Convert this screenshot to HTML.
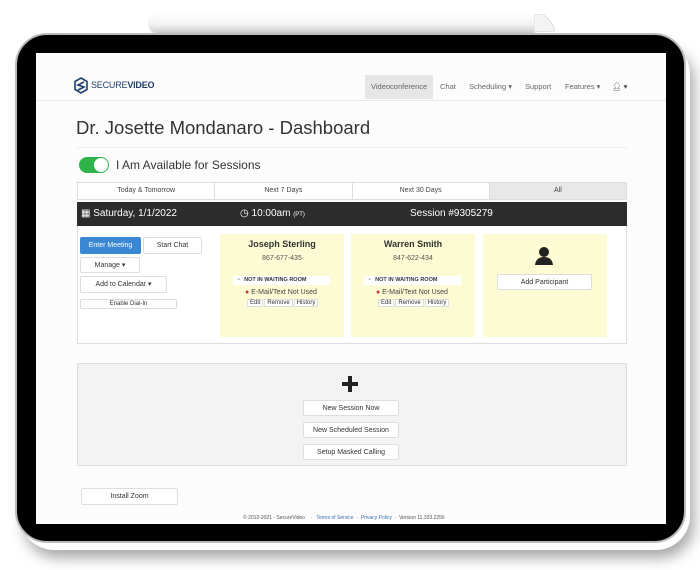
<!DOCTYPE html>
<html><head><style>
*{margin:0;padding:0;box-sizing:border-box}
body{width:700px;height:570px;background:#fff;position:relative;overflow:hidden;font-family:"Liberation Sans",sans-serif;color:#333}
.a{position:absolute}
.btn{position:absolute;background:#fff;border:1px solid #ddd;border-radius:2px;font-size:7px;text-align:center;color:#333}
.card{position:absolute;background:#fdfbd3;top:234px;height:103px;width:124px;text-align:center}
.nav{position:absolute;top:82px;font-size:7.5px;color:#666}
</style></head><body>
<div class="a" style="left:150px;top:14px;width:385px;height:18px;background:linear-gradient(#fff,#f2f2f2 60%,#d0d0d0);border-radius:9px 2px 2px 9px;box-shadow:0 2px 3px rgba(0,0,0,.25)"></div>
<svg class="a" style="left:534px;top:14px" width="22" height="18" viewBox="0 0 22 18"><path d="M0 0 L8 0 Q18 6 21 17 L0 18Z" fill="#f4f4f4" stroke="#ccc" stroke-width=".6"/></svg>
<div class="a" style="left:20px;top:40px;width:670px;height:510px;border-radius:34px;box-shadow:4px 8px 14px rgba(0,0,0,.35)"></div>
<div class="a" style="left:15px;top:33px;width:671px;height:510px;background:#000;border-radius:32px;border:2px solid #bbb"></div>
<div class="a" style="left:36px;top:53px;width:630px;height:471px;background:#fcfcfc"></div>
<svg class="a" style="left:74px;top:77px" width="14" height="17" viewBox="0 0 14 17"><path d="M7 1 L13 4.5 V12.5 L7 16 L1 12.5 V4.5Z" fill="none" stroke="#1f3e6e" stroke-width="1.6"/><path d="M10 5 L4 8 L10 10 L4 13" fill="none" stroke="#1f3e6e" stroke-width="1.6"/></svg>
<div class="a" style="left:91px;top:80px;font-size:9px;color:#1f3e6e;letter-spacing:-.2px">SECURE<b>VIDEO</b></div>
<div class="a" style="left:365px;top:75px;width:68px;height:24px;background:#e6e6e6"></div>
<div class="nav" style="left:371px">Videoconference</div>
<div class="nav" style="left:440px">Chat</div>
<div class="nav" style="left:469px">Scheduling ▾</div>
<div class="nav" style="left:525px">Support</div>
<div class="nav" style="left:565px">Features ▾</div>
<div class="nav" style="left:612px;color:#444">👤︎ ▾</div>
<div class="a" style="left:36px;top:100px;width:630px;height:1px;background:#e8e8e8"></div>
<div class="a" style="left:76px;top:117px;font-size:18.5px;color:#333">Dr. Josette Mondanaro - Dashboard</div>
<div class="a" style="left:77px;top:147px;width:550px;height:1px;background:#eee"></div>
<div class="a" style="left:79px;top:157px;width:30px;height:16px;background:#2fb34a;border-radius:8px"><div style="position:absolute;right:1px;top:1px;width:14px;height:14px;border-radius:50%;background:#fff"></div></div>
<div class="a" style="left:116px;top:158px;font-size:12px;color:#333">I Am Available for Sessions</div>
<div class="a" style="left:77px;top:182px;width:550px;height:18px;border:1px solid #ddd;display:flex;font-size:7px;color:#444;background:#fff">
<div style="flex:1;text-align:center;line-height:16px;border-right:1px solid #ddd">Today &amp; Tomorrow</div>
<div style="flex:1;text-align:center;line-height:16px;border-right:1px solid #ddd">Next 7 Days</div>
<div style="flex:1;text-align:center;line-height:16px;border-right:1px solid #ddd">Next 30 Days</div>
<div style="flex:1;text-align:center;line-height:16px;background:#e8e8e8">All</div></div>
<div class="a" style="left:77px;top:202px;width:550px;height:24px;background:#2c2c2c;color:#fff;font-size:10px">
<span class="a" style="left:4px;top:6px">▦ Saturday, 1/1/2022</span>
<span class="a" style="left:163px;top:6px">◷ 10:00am <small style="font-size:6px">(PT)</small></span>
<span class="a" style="left:333px;top:6px">Session #9305279</span></div>
<div class="a" style="left:77px;top:226px;width:550px;height:118px;border:1px solid #ddd;border-top:none;background:#fff"></div>
<div class="btn" style="left:80px;top:237px;width:61px;height:17px;line-height:16px;background:#3a87d4;color:#fff;border-color:#3a87d4">Enter Meeting</div>
<div class="btn" style="left:143px;top:237px;width:59px;height:17px;line-height:16px">Start Chat</div>
<div class="btn" style="left:80px;top:257px;width:60px;height:16px;line-height:15px">Manage ▾</div>
<div class="btn" style="left:80px;top:276px;width:87px;height:17px;line-height:16px">Add to Calendar ▾</div>
<div class="btn" style="left:80px;top:299px;width:97px;height:10px;line-height:9px;font-size:6px">Enable Dial-In</div>
<div class="card" style="left:220px"><div style="font-size:9px;font-weight:bold;margin-top:5px">Joseph Sterling</div><div style="font-size:7px;margin-top:6px;color:#555">867-677-435</div></div>
<div class="card" style="left:351px"><div style="font-size:9px;font-weight:bold;margin-top:5px">Warren Smith</div><div style="font-size:7px;margin-top:6px;color:#555">847-622-434</div></div>
<div class="card" style="left:483px"></div>
<div class="a" style="left:233px;top:276px;width:97px;height:9px;background:#fff;font-size:5.5px;line-height:9px;font-weight:bold">&nbsp;&nbsp;&nbsp;▫&nbsp;&nbsp;&nbsp;NOT IN WAITING ROOM</div>
<div class="a" style="left:364px;top:276px;width:97px;height:9px;background:#fff;font-size:5.5px;line-height:9px;font-weight:bold">&nbsp;&nbsp;&nbsp;▫&nbsp;&nbsp;&nbsp;NOT IN WAITING ROOM</div>
<div class="a" style="left:245px;top:289px;font-size:7px;color:#444"><span style="color:#c33">●</span> E-Mail/Text Not Used</div>
<div class="a" style="left:376px;top:289px;font-size:7px;color:#444"><span style="color:#c33">●</span> E-Mail/Text Not Used</div>
<div class="a" style="left:247px;top:299px;font-size:6px;display:flex;gap:1px"><span style="background:#fff;border:1px solid #ddd;padding:0 2px">Edit</span><span style="background:#fff;border:1px solid #ddd;padding:0 2px">Remove</span><span style="background:#fff;border:1px solid #ddd;padding:0 2px">History</span></div>
<div class="a" style="left:378px;top:299px;font-size:6px;display:flex;gap:1px"><span style="background:#fff;border:1px solid #ddd;padding:0 2px">Edit</span><span style="background:#fff;border:1px solid #ddd;padding:0 2px">Remove</span><span style="background:#fff;border:1px solid #ddd;padding:0 2px">History</span></div>
<svg class="a" style="left:535px;top:246px" width="18" height="19" viewBox="0 0 18 19"><circle cx="9" cy="6" r="5" fill="#222"/><path d="M0 19 Q1 11 9 11 Q17 11 18 19Z" fill="#222"/></svg>
<div class="btn" style="left:497px;top:274px;width:95px;height:16px;line-height:15px">Add Participant</div>
<div class="a" style="left:77px;top:363px;width:550px;height:103px;background:#f3f3f3;border:1px solid #ddd"></div>
<div class="a" style="left:342px;top:376px;width:16px;height:16px"><div class="a" style="left:6px;top:0;width:4px;height:16px;background:#222"></div><div class="a" style="left:0;top:6px;width:16px;height:4px;background:#222"></div></div>
<div class="btn" style="left:303px;top:400px;width:96px;height:16px;line-height:15px">New Session Now</div>
<div class="btn" style="left:303px;top:422px;width:96px;height:16px;line-height:15px">New Scheduled Session</div>
<div class="btn" style="left:303px;top:444px;width:96px;height:16px;line-height:15px">Setup Masked Calling</div>
<div class="btn" style="left:81px;top:488px;width:97px;height:17px;line-height:16px">Install Zoom</div>
<div class="a" style="left:243px;top:515px;font-size:5px;color:#555">© 2012-2021 - SecureVideo &nbsp;&nbsp; · &nbsp;&nbsp;<span style="color:#3a6fb0">Terms of Service</span> &nbsp;·&nbsp; <span style="color:#3a6fb0">Privacy Policy</span> &nbsp;·&nbsp; Version 11.333.2256</div>
</body></html>
